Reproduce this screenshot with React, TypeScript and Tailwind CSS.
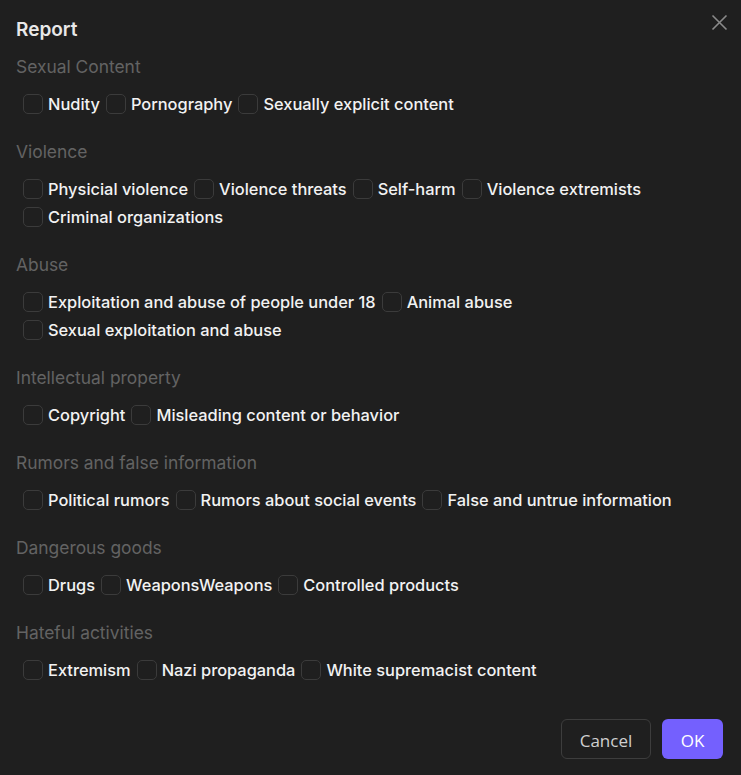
import React from "react";

const sections: { title: string; items: string[] }[] = [
  { title: "Sexual Content", items: ["Nudity", "Pornography", "Sexually explicit content"] },
  {
    title: "Violence",
    items: ["Physicial violence", "Violence threats", "Self-harm", "Violence extremists", "Criminal organizations"],
  },
  {
    title: "Abuse",
    items: ["Exploitation and abuse of people under 18", "Animal abuse", "Sexual exploitation and abuse"],
  },
  { title: "Intellectual property", items: ["Copyright", "Misleading content or behavior"] },
  {
    title: "Rumors and false information",
    items: ["Political rumors", "Rumors about social events", "False and untrue information"],
  },
  { title: "Dangerous goods", items: ["Drugs", "WeaponsWeapons", "Controlled products"] },
  { title: "Hateful activities", items: ["Extremism", "Nazi propaganda", "White supremacist content"] },
];

function Check({ label }: { label: string }) {
  const [on, setOn] = React.useState(false);
  return (
    <label className="flex items-center gap-[5px] h-[28px] cursor-pointer" onClick={() => setOn(!on)}>
      <span
        className={
          "w-[20px] h-[20px] rounded-[5px] border shrink-0 " +
          (on ? "bg-[#7460fe] border-[#7460fe]" : "border-[#3b3b3b] bg-[#1f1f1f]")
        }
      />
      <span className="text-[16.4px] font-medium text-[#f2f2f2] leading-[28px]">{label}</span>
    </label>
  );
}

export default function App() {
  return (
    <div
      className="relative w-[741px] h-[775px] bg-[#1f1f1f] flex flex-col"
      style={{ fontFamily: "Inter, 'Noto Sans', sans-serif" }}
    >
      <button className="absolute left-[711px] top-[14px] w-[17px] h-[17px] text-[#8a8a8a]">
        <svg viewBox="0 0 17 17" width="17" height="17" fill="none" stroke="currentColor" strokeWidth="1.6">
          <path d="M1.5 1.5 L15.5 15.5 M15.5 1.5 L1.5 15.5" />
        </svg>
      </button>
      <div className="pt-[18px] pl-[16px] pr-4">
        <h1 className="text-[19px] font-semibold leading-[24px] text-[#e8e8e8]">Report</h1>
        <div className="mt-[13px] flex flex-col gap-[22px]">
          {sections.map((s) => (
            <div key={s.title} className="flex flex-col gap-[11px]">
              <div className="text-[17.4px] leading-[24px] text-[#636363]">{s.title}</div>
              <div className="flex flex-wrap gap-x-[6px] pl-[7px]">
                {s.items.map((it) => (
                  <Check key={it} label={it} />
                ))}
              </div>
            </div>
          ))}
        </div>
      </div>
      <div className="mt-auto flex justify-end gap-[11px] pr-[18px] pb-[16px]">
        <button
          className="w-[90px] h-[40px] pt-[3px] rounded-[6px] border border-[#3d3d3d] bg-[#1f1f1f] text-[#d0d0d0] text-[17px]"
          style={{ fontFamily: "'Open Sans', 'Noto Sans', sans-serif" }}
        >
          Cancel
        </button>
        <button
          className="w-[61px] h-[40px] pt-[3px] rounded-[6px] bg-[#7460fe] text-white text-[17px]"
          style={{ fontFamily: "'Open Sans', 'Noto Sans', sans-serif" }}
        >
          OK
        </button>
      </div>
    </div>
  );
}
